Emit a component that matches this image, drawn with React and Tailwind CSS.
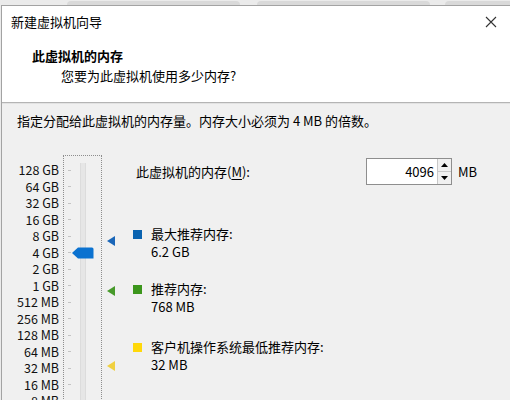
export default function App() {
  const labels = ["128 GB","64 GB","32 GB","16 GB","8 GB","4 GB","2 GB","1 GB","512 MB","256 MB","128 MB","64 MB","32 MB","16 MB","8 MB","4 MB"];
  return (
    <div className="w-[510px] h-[400px] overflow-hidden bg-[#ebebeb] text-black text-[13px] font-[family-name:'Noto_Sans_CJK_SC','Noto_Sans',sans-serif]">
      <div className="h-[5px] flex items-end">
        <div className="ml-[67px] w-[173px] h-[4px] bg-[#d9d9d9] rounded-t-md"></div>
        <div className="ml-[17px] w-[173px] h-[4px] bg-[#d9d9d9] rounded-t-md"></div>
        <div className="ml-[15px] flex-1 h-[4px] bg-[#d9d9d9] rounded-tl-md"></div>
      </div>
      <div className="ml-px border-t border-l border-[#a3a3a3] bg-[#f0f0f0] h-[395px]">
        <div className="bg-white h-[97px] border-b border-[#b4b4b4]">
          <div className="h-[32px] flex items-center justify-between pl-[9px] pr-[13px]">
            <span className="leading-[20px]">新建虚拟机向导</span>
            <svg width="12" height="12" viewBox="0 0 12 12" className="text-[#333]">
              <path d="M1 1 L11 11 M11 1 L1 11" stroke="currentColor" strokeWidth="1.1" fill="none" />
            </svg>
          </div>
          <div className="mt-[8px] pl-[30px] leading-[20px] font-bold">此虚拟机的内存</div>
          <div className="pl-[59px] leading-[20px]">您要为此虚拟机使用多少内存?</div>
        </div>
        <div className="border-t border-[#e2e2e2] pl-[15px] pt-[7px]">
          <div className="leading-[20px]">指定分配给此虚拟机的内存量。内存大小必须为 4 MB 的倍数。</div>
          <div className="relative flex mt-[24px] h-[260px]">
            <div className="w-[42px] pt-[7px] text-right text-[12.5px] leading-[16.5px] text-[#111]">
              {labels.map((l) => (
                <div key={l}>{l}</div>
              ))}
            </div>
            <div className="ml-[4px] w-[39px] h-[300px] border border-dotted border-[#8d8d8d] flex">
              <div className="ml-[4px] pt-[6px] flex flex-col">
                {labels.map((l) => (
                  <div key={l} className="h-[16.5px] flex items-center">
                    <div className="w-[3px] h-px bg-[#c4c4c4]"></div>
                  </div>
                ))}
              </div>
              <div className="ml-[9px] mt-[7px] w-[6px] bg-[#e6e6e6] border-x border-[#dcdcdc]"></div>
            </div>
            <svg className="absolute left-[55px] top-[92px]" width="22" height="12" viewBox="0 0 22 12">
              <path d="M0 6 L6 0.5 L20 0.5 Q21.5 0.5 21.5 2 L21.5 11.5 L6 11.5 Z" fill="#0b72d0" />
            </svg>
            <svg className="absolute left-[90px] top-[81px]" width="8" height="10" viewBox="0 0 8 10">
              <path d="M0 5 L8 0 L8 10 Z" fill="#1a66b8" />
            </svg>
            <svg className="absolute left-[90px] top-[131px]" width="8" height="10" viewBox="0 0 8 10">
              <path d="M0 5 L8 0 L8 10 Z" fill="#479a2b" />
            </svg>
            <svg className="absolute left-[90px] top-[206px]" width="8" height="10" viewBox="0 0 8 10">
              <path d="M0 5 L8 0 L8 10 Z" fill="#f0d040" />
            </svg>
            <div className="ml-[31px] flex-1 flex flex-col">
              <div className="mt-[3px] h-[27px] flex items-center">
                <span className="w-[233px] pl-[3px] leading-[20px]">此虚拟机的内存(<span className="underline underline-offset-2">M</span>):</span>
                <div className="flex h-[27px] border border-[#8e8e8e] bg-white">
                  <div className="w-[70px] flex items-center justify-end pr-[3px] leading-[20px]">4096</div>
                  <div className="w-[14px] flex flex-col bg-[#f0f0f0] border-l border-[#c8c8c8]">
                    <div className="flex-1 flex items-center justify-center border-b border-[#c8c8c8]">
                      <svg width="7" height="4" viewBox="0 0 7 4"><path d="M0 4 L3.5 0 L7 4 Z" fill="#000" /></svg>
                    </div>
                    <div className="flex-1 flex items-center justify-center">
                      <svg width="7" height="4" viewBox="0 0 7 4"><path d="M0 0 L3.5 4 L7 0 Z" fill="#000" /></svg>
                    </div>
                  </div>
                </div>
                <span className="ml-[6px] leading-[20px]">MB</span>
              </div>
              <div className="mt-[40px] flex items-start">
                <div className="mt-[5px] w-[9px] h-[9px] bg-[#0a63b0]"></div>
                <div className="ml-[9px] leading-[18px]">
                  <div>最大推荐内存:</div>
                  <div>6.2 GB</div>
                </div>
              </div>
              <div className="mt-[19px] flex items-start">
                <div className="mt-[5px] w-[9px] h-[9px] bg-[#3c961c]"></div>
                <div className="ml-[9px] leading-[18px]">
                  <div>推荐内存:</div>
                  <div>768 MB</div>
                </div>
              </div>
              <div className="mt-[22px] flex items-start">
                <div className="mt-[5px] w-[9px] h-[9px] bg-[#ffd80a]"></div>
                <div className="ml-[9px] leading-[18px]">
                  <div>客户机操作系统最低推荐内存:</div>
                  <div>32 MB</div>
                </div>
              </div>
            </div>
          </div>
        </div>
      </div>
    </div>
  );
}
